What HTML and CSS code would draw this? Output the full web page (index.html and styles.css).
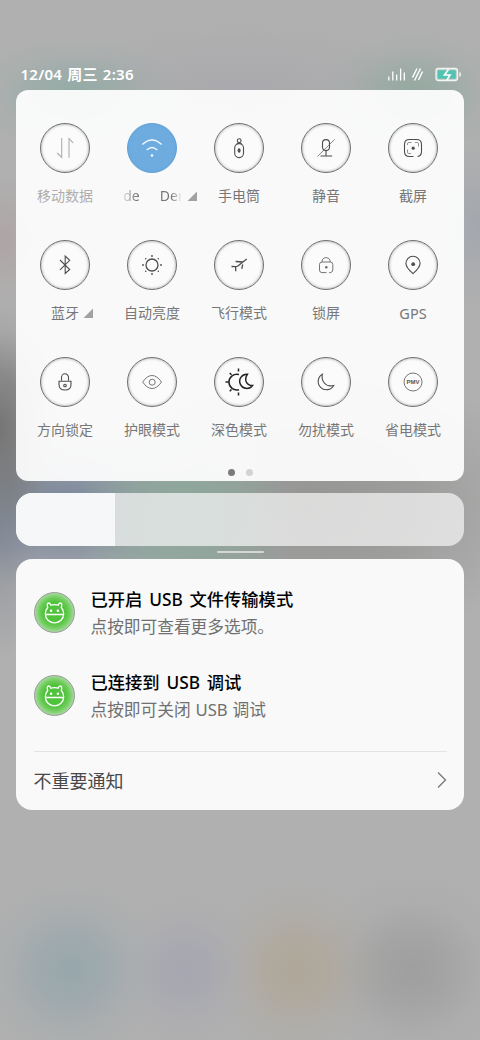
FILE: index.html
```html
<!DOCTYPE html>
<html lang="zh-CN">
<head>
<meta charset="utf-8">
<title>控制中心</title>
<link rel="stylesheet" href="styles.css">
</head>
<body>
<div class="screen">
  <header class="status">
    <span class="clock">12/04 周三 2:36</span>
    <svg class="status-icons" width="76" height="20" viewBox="0 0 76 20">
      <g stroke="#fff" stroke-width="1.5" fill="none">
        <path d="M1.800 15.500v-4M5.800 15.500v-9M9.700 15.500v-6M13.600 15.500v-12M17.300 15.500v-8" stroke-width="1.300"/>
        <path d="M25.500 12.500l4.500-9M27.500 15.500l6-12M31.500 15l4-8.500" stroke-width="1.400"/>
      </g>
      <rect x="49" y="3.500" width="21.500" height="12" rx="2.500" fill="#ffffff55" stroke="#f2f5f4" stroke-width="1.300"/>
      <rect x="50.800" y="5.200" width="18" height="8.600" rx="1" fill="#50c4b0"/>
      <path d="M73 7.500v4" stroke="#fff" stroke-width="1.300"/>
      <path d="M61.500 4.500l-4 5.500h5.500l-3 5" stroke="#fff" stroke-width="1.700" fill="none"/>
    </svg>
  </header>

  <section class="panel toggles">
    <div class="grid">
      <div class="tile off"><div class="knob"><svg viewBox="0 0 50 50"><path d="M21.700 15v19.500l-4.500-4.500M29 34.800V15.500l4.200 4.300"/></svg></div><span class="label">移动数据</span></div>
      <div class="tile"><div class="knob active"><svg viewBox="0 0 50 50"><path d="M15.300 21.500q9.700-9 19.400 0M19.800 27q5.200-5 10.400 0" stroke-width="1.300"/><circle class="dot" cx="25" cy="32.500" r="1.300"/></svg></div><span class="label wifi"><span class="marquee"><span>de</span><span>Der</span></span><i class="corner"></i></span></div>
      <div class="tile"><div class="knob"><svg viewBox="0 0 50 50"><circle cx="25.200" cy="17.700" r="1.900"/><path d="M24 20l-1 1M26.500 20l1 1"/><rect x="20.700" y="20.600" width="8.800" height="14" rx="4.300"/><ellipse class="dot" cx="25.100" cy="27.500" rx="1.500" ry="2.300"/></svg></div><span class="label">手电筒</span></div>
      <div class="tile"><div class="knob"><svg viewBox="0 0 50 50"><rect x="21.500" y="16.600" width="7" height="11" rx="3.500"/><path d="M25 27.600V33M19.500 33h11.700"/><path d="M16.600 33.300l17-16.900" stroke-width=".7"/></svg></div><span class="label">静音</span></div>
      <div class="tile"><div class="knob"><svg viewBox="0 0 50 50"><path d="M25.500 33.500H21.500Q16.500 33.500 16.500 28.500V21.500Q16.500 16.500 21.500 16.500H28.500Q33.500 16.500 33.500 21.500V28.500Q33.500 33 29.500 33.500"/><path d="M19.500 22v-1.200q0-1.300 1.300-1.300H23.500M27 19.500h2.200q1.300 0 1.300 1.300v2.700M19.500 26.500v2.700q0 1.300 1.300 1.300H23" stroke-width=".6"/><circle class="dot" cx="25.200" cy="25.200" r="1.600"/></svg></div><span class="label">截屏</span></div>

      <div class="tile"><div class="knob"><svg viewBox="0 0 50 50"><path d="M20 20l9.700 9.500-4.500 4V16l4.500 4.300L20 29.800"/></svg></div><span class="label bt">蓝牙<i class="corner"></i></span></div>
      <div class="tile"><div class="knob"><svg viewBox="0 0 50 50"><circle cx="25" cy="25" r="6" stroke-width="1.300"/><g class="dot"><circle cx="25" cy="16" r=".9"/><circle cx="25" cy="34" r=".9"/><circle cx="16" cy="25" r=".9"/><circle cx="34" cy="25" r=".9"/><circle cx="18.700" cy="18.700" r=".8"/><circle cx="31.300" cy="18.700" r=".8"/><circle cx="18.700" cy="31.300" r=".8"/><circle cx="31.300" cy="31.300" r=".8"/></g></svg></div><span class="label">自动亮度</span></div>
      <div class="tile"><div class="knob"><svg viewBox="0 0 50 50"><path d="M32.700 19L24.200 25.700Q23 26.700 21.200 26.700L17.500 26.500M21.600 21.500L28.800 22M21.600 27.200L21.800 31.200M28.700 24.500L27.800 28.800" stroke-width="1.300"/></svg></div><span class="label">飞行模式</span></div>
      <div class="tile"><div class="knob thin"><svg viewBox="0 0 50 50"><path d="M25.500 32.600H21Q18.500 32.600 18.500 30V24.500Q18.500 22 21 22H29.300Q31.800 22 31.800 24.500V30Q31.800 32.200 29.300 32.600H28M21 22q0-4.300 4.100-4.300T29.200 22"/><circle class="dot" cx="25.300" cy="27.300" r="1.200"/></svg></div><span class="label">锁屏</span></div>
      <div class="tile"><div class="knob"><svg viewBox="0 0 50 50"><path d="M25 33.700Q17.900 27.500 17.900 23.300A7.100 7.100 0 0 1 32.100 23.300Q32.100 27.500 25 33.700Z"/><circle class="dot" cx="25.200" cy="24.200" r="1.900"/></svg></div><span class="label gps">GPS</span></div>

      <div class="tile"><div class="knob"><svg viewBox="0 0 50 50"><path d="M21.500 23.500V20.500a3.500 3.800 0 0 1 7 0V23.500M19 24.200H31V27.500Q31 33 25 33T19 27.500Z"/><circle cx="25" cy="28.500" r="1.300"/></svg></div><span class="label">方向锁定</span></div>
      <div class="tile"><div class="knob thin"><svg viewBox="0 0 50 50"><path d="M15.700 25Q20 18.500 25 18.500T34.500 25Q30 31.500 25 31.500T15.700 25Z"/><circle cx="25.200" cy="25.200" r="3"/></svg></div><span class="label">护眼模式</span></div>
      <div class="tile"><div class="knob dark"><svg viewBox="0 0 50 50"><path d="M25 17.500a7.900 7.900 0 1 0 0 15.200"/><path d="M33.500 17.200a7.100 7.100 0 1 0 5 11.300Q34 28.500 32.300 25T33.500 17.200Z"/><path d="M24.500 11.500v3M11.500 25h3M24.500 35.500v3M15.700 16l1.800 1.800M17.500 32.500l-1.800 1.800"/></svg></div><span class="label">深色模式</span></div>
      <div class="tile"><div class="knob"><svg viewBox="0 0 50 50"><path d="M21.400 17.200A8.300 8.300 0 1 0 32.700 28.500Q26.500 30 23.300 26T21.400 17.200Z"/></svg></div><span class="label">勿扰模式</span></div>
      <div class="tile"><div class="knob thin"><svg viewBox="0 0 50 50"><circle cx="25" cy="25" r="9"/><text x="25.100" y="27.400" class="pmv">PMV</text></svg></div><span class="label">省电模式</span></div>
    </div>
    <div class="pager"><i></i><i></i></div>
  </section>

  <div class="brightness"><div class="level"></div></div>
  <div class="handle"></div>

  <section class="panel notices">
    <article class="notice">
      <div class="bot"><svg viewBox="0 0 40 40"><path d="M10.600 21.500A9.400 9.200 0 0 0 29.400 21.500Q29.400 17.500 27 14.800Q28.300 10.200 25.800 10.200Q24.500 10.200 23.800 12.400Q20 11.500 16.200 12.400Q15.500 10.200 14.200 10.200Q11.700 10.200 13 14.800Q10.600 17.500 10.600 21.500ZM10.600 22H29.400"/><g class="dot"><circle cx="16.500" cy="18.300" r="1.300"/><circle cx="23.500" cy="18.300" r="1.300"/></g></svg></div>
      <div class="copy"><b>已开启 USB 文件传输模式</b><span>点按即可查看更多选项。</span></div>
    </article>
    <article class="notice">
      <div class="bot"><svg viewBox="0 0 40 40"><path d="M10.600 21.500A9.400 9.200 0 0 0 29.400 21.500Q29.400 17.500 27 14.800Q28.300 10.200 25.800 10.200Q24.500 10.200 23.800 12.400Q20 11.500 16.200 12.400Q15.500 10.200 14.200 10.200Q11.700 10.200 13 14.800Q10.600 17.500 10.600 21.500ZM10.600 22H29.400"/><g class="dot"><circle cx="16.500" cy="18.300" r="1.300"/><circle cx="23.500" cy="18.300" r="1.300"/></g></svg></div>
      <div class="copy"><b>已连接到 USB 调试</b><span>点按即可关闭 USB 调试</span></div>
    </article>
    <div class="more"><span>不重要通知</span><svg width="10" height="18" viewBox="0 0 10 18"><path d="M1 1.500l7.500 7.500L1 16.500"/></svg></div>
  </section>
</div>
</body>
</html>
```

FILE: styles.css
```css
* { box-sizing: border-box; }
body { margin: 0; font-family: "Noto Sans", "Noto Sans CJK SC", sans-serif; }
.screen {
  width: 480px;
  height: 1040px;
  padding: 59.500px 16px 0;
  overflow: hidden;
  background:
    radial-gradient(ellipse 90px 90px at 70px 970px, #93a5abdd 0%, #93a5ab99 35%, #93a5ab2b 70%, #93a5ab00 100%),
    radial-gradient(ellipse 75px 75px at 185px 970px, #a4a5b0dd 0%, #a4a5b099 35%, #a4a5b02b 70%, #a4a5b000 100%),
    radial-gradient(ellipse 85px 90px at 296px 970px, #afa594dd 0%, #afa59499 35%, #afa5942b 70%, #afa59400 100%),
    radial-gradient(ellipse 100px 95px at 412px 970px, #9c9c9cdd 0%, #9c9c9c99 35%, #9c9c9c2b 70%, #9c9c9c00 100%),
    radial-gradient(ellipse 110px 60px at 75px 95px, #93aba6 0%, #93aba699 40%, #93aba62b 70%, #93aba600 100%),
    radial-gradient(ellipse 95px 65px at 415px 95px, #93a9a0 0%, #93a9a099 40%, #93a9a02b 70%, #93a9a000 100%),
    radial-gradient(ellipse 190px 65px at 240px 90px, #a9a8ac 0%, #a9a8ac00 100%),
    radial-gradient(ellipse 60px 65px at 0 240px, #aea5a5 0%, #aea5a500 100%),
    radial-gradient(ellipse 60px 85px at 480px 225px, #a3a7ad 0%, #a3a7ad00 100%),
    radial-gradient(ellipse 70px 135px at 0 430px, #757575 0%, #757575aa 40%, #75757522 75%, #75757500 100%),
    radial-gradient(ellipse 110px 110px at 185px 515px, #8ba89b 0%, #8ba89b99 50%, #8ba89b00 100%),
    radial-gradient(ellipse 120px 85px at 65px 510px, #76849a 0%, #76849a99 45%, #76849a00 100%),
    radial-gradient(ellipse 230px 150px at 310px 505px, #959594 0%, #959594aa 50%, #95959400 100%),
    radial-gradient(ellipse 45px 130px at 0 530px, #90939a 0%, #90939a00 100%),
    #b0b0b0;
}
.status { display: flex; justify-content: space-between; height: 30px; padding: 4.500px 0 0 4.500px; }
.clock { font-size: 15px; line-height: 20px; font-weight: 600; color: #fff; letter-spacing: .25px; word-spacing: 1px; white-space: nowrap; }
.status-icons { display: block; margin: 1px 1.500px 0 0; }
.panel { background: rgba(255, 255, 255, .92); }

.toggles { height: 391px; padding: 33.200px 5.500px 0; border-radius: 12px; }
.grid { display: grid; grid-template-columns: repeat(5, 87px); grid-auto-rows: 117.300px; }
.tile { display: flex; flex-direction: column; align-items: center; }
.knob {
  width: 50px;
  height: 50px;
  border: 1.500px solid #6f6f6f;
  border-radius: 50%;
  box-shadow: inset 0 0 3px #999;
  color: #4d4d4d;
  background: #fbfbfb;
}
.knob svg { display: block; width: 50px; height: 50px; margin: -1px; fill: none; stroke: currentColor; stroke-width: 1.100; }
.knob .dot { fill: currentColor; stroke: none; }
.knob.active { background: #6eace0; border-color: #64a3d8; box-shadow: inset 0 0 3px #66a4d9; color: #f5faff; }
.off .knob { color: #aeaeae; }
.knob.thin { color: #666; }
.knob.thin svg { stroke-width: .9; }
.knob.dark { color: #222; }
.knob.dark svg { stroke-width: 1.500; }
.knob .pmv { font: bold 6px "Liberation Sans", sans-serif; text-anchor: middle; fill: #555; stroke: none; }
.label { display: flex; justify-content: center; margin-top: 13px; height: 20px; font-size: 14px; line-height: 20px; font-weight: 400; color: #777; white-space: nowrap; }
.gps { font-size: 14.500px; }
.off .label { color: #aeaeae; }
.corner { width: 10px; height: 10px; margin: 5.500px 0 0 4px; background: #a2a2a2; clip-path: polygon(100% 0, 100% 100%, 0 100%); }
.bt { padding-left: 14px; }
.wifi { width: 74px; margin-left: 16.500px; justify-content: space-between; }
.marquee { display: flex; gap: 20px; width: 60px; -webkit-mask-image: linear-gradient(90deg, #0003 0, #000 14px, #000 48px, transparent 59px); mask-image: linear-gradient(90deg, #0003 0, #000 14px, #000 48px, transparent 59px); }
.pager { display: flex; justify-content: center; gap: 11px; margin-top: -6px; }
.pager i { width: 7px; height: 7px; border-radius: 50%; background: #7b7b7b; }
.pager i + i { background: #d3d3d3; }

.brightness { height: 53.500px; margin-top: 12px; overflow: hidden; border-radius: 16px; background: rgba(244, 244, 244, .73); }
.level { width: 98.700px; height: 100%; background: #f6f7f9; }
.handle { width: 47px; height: 2px; margin: 4.500px auto 6.500px; border-radius: 1px; background: #d4d7d6; }

.notices { height: 250.500px; padding: 33px 17.500px 0; border-radius: 16px; background: #f9f9f9; }
.notice { display: flex; height: 82.700px; }
.bot { width: 41px; height: 41px; flex: none; border: 1px solid #999; border-radius: 50%; background: radial-gradient(circle, #50c33c 0 38%, #6ccc58 53%, #a2d99a 70%); }
.bot svg { display: block; width: 39px; height: 39px; fill: none; stroke: #fff; stroke-width: 1.400; }
.bot .dot { fill: #fff; stroke: none; }
.copy { display: flex; flex-direction: column; margin: -6px 0 0 16px; white-space: nowrap; }
.copy b { font-size: 17.300px; line-height: 27px; font-weight: 500; color: #000; word-spacing: 2.300px; }
.copy span { font-size: 16.700px; line-height: 27px; font-weight: 400; color: #707070; word-spacing: .5px; }
.more { display: flex; align-items: center; justify-content: space-between; height: 58px; margin-top: -6.500px; border-top: 1px solid #e3e3e3; color: #484848; font-size: 18px; font-weight: 400; }
.more svg { fill: none; stroke: #777; stroke-width: 1.300; }
```
